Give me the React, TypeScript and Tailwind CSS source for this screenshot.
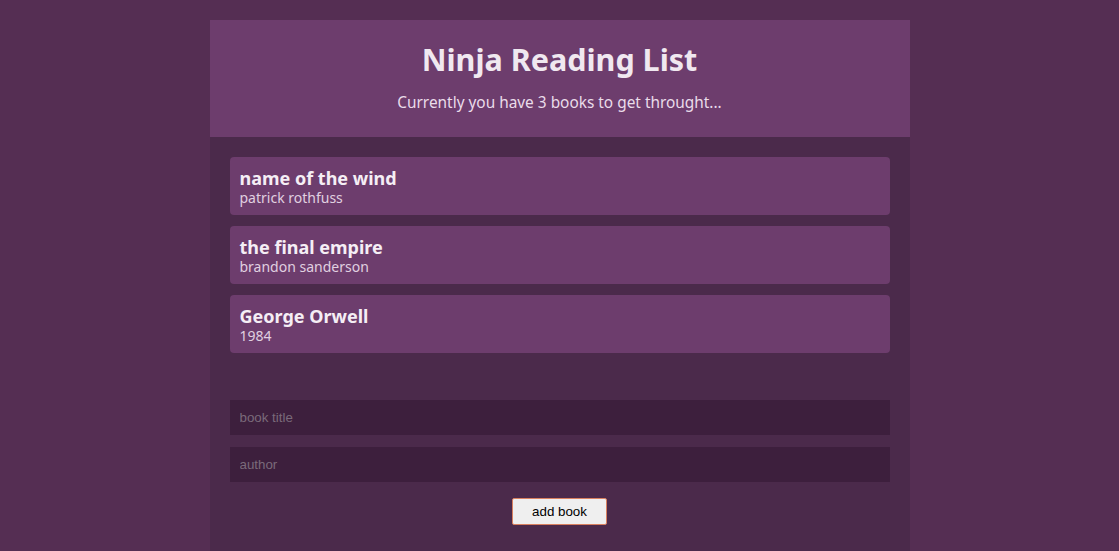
import { useState } from "react";

type Book = { title: string; author: string };

const initialBooks: Book[] = [
  { title: "name of the wind", author: "patrick rothfuss" },
  { title: "the final empire", author: "brandon sanderson" },
  { title: "George Orwell", author: "1984" },
];

function BookItem({ book }: { book: Book }) {
  return (
    <li className="bg-[#6d3d6d] rounded px-[10px] pt-[10px] h-[58px]">
      <div className="text-[18px] leading-[22px] font-bold text-[#f5eef5]">{book.title}</div>
      <div className="text-[14px] leading-[18px] text-[#e0d0e0]">{book.author}</div>
    </li>
  );
}

export default function App() {
  const [books] = useState(initialBooks);

  return (
    <div className="min-h-[551px] bg-[#552e53] pt-5 font-['Noto_Sans',sans-serif]">
      <div className="mx-auto w-[700px]">
        <header className="bg-[#6d3d6d] h-[117px] flex flex-col items-center pt-[20px]">
          <h1 className="text-[30.5px] leading-[38px] font-bold text-[#f0e8f0]">Ninja Reading List</h1>
          <p className="mt-[15px] text-[15.4px] leading-[20px] text-[#eadcea]">
            Currently you have {books.length} books to get throught...
          </p>
        </header>
        <main className="bg-[#4b2a4b] px-5 pt-5 pb-[26px]">
          <ul className="flex flex-col gap-[11px]">
            {books.map((b) => (
              <BookItem key={b.title} book={b} />
            ))}
          </ul>
          <form className="mt-[47px] flex flex-col gap-[12px] font-['Liberation_Sans',Arial,sans-serif]">
            <input
              placeholder="book title"
              className="h-[35px] bg-[#3d1f3d] px-[10px] text-[13.33px] text-[#ddd] placeholder:text-[#7a6a7a] outline-none"
            />
            <input
              placeholder="author"
              className="h-[35px] bg-[#3d1f3d] px-[10px] text-[13.33px] text-[#ddd] placeholder:text-[#7a6a7a] outline-none"
            />
            <button
              type="button"
              className="mx-auto mt-[4px] w-[95px] h-[27px] bg-[#efefef] border border-[#d9805f] text-[13.33px] text-black rounded-[2px]"
            >
              add book
            </button>
          </form>
        </main>
      </div>
    </div>
  );
}
